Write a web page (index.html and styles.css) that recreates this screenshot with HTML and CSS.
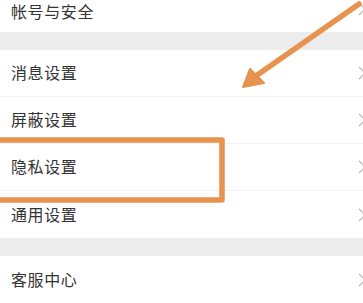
FILE: index.html
```html
<!DOCTYPE html>
<html lang="zh">
<head>
<meta charset="utf-8">
<link rel="stylesheet" href="styles.css">
</head>
<body>
<div class="page">
  <div class="group">
    <div class="row row-first"><span class="label">帐号与安全</span><svg class="chev" viewBox="0 0 8 14"><polyline points="1,1 7,7 1,13"/></svg></div>
  </div>
  <div class="band"></div>
  <div class="group">
    <div class="row"><span class="label">消息设置</span><svg class="chev" viewBox="0 0 8 14"><polyline points="1,1 7,7 1,13"/></svg></div>
    <div class="row"><span class="label">屏蔽设置</span><svg class="chev" viewBox="0 0 8 14"><polyline points="1,1 7,7 1,13"/></svg></div>
    <div class="row"><span class="label">隐私设置</span><svg class="chev" viewBox="0 0 8 14"><polyline points="1,1 7,7 1,13"/></svg></div>
    <div class="row"><span class="label">通用设置</span><svg class="chev" viewBox="0 0 8 14"><polyline points="1,1 7,7 1,13"/></svg></div>
  </div>
  <div class="band"></div>
  <div class="group">
    <div class="row"><span class="label">客服中心</span><svg class="chev" viewBox="0 0 8 14"><polyline points="1,1 7,7 1,13"/></svg></div>
  </div>
  <svg class="annot" viewBox="0 0 363 303" width="363" height="303">
    <line x1="359" y1="4" x2="253" y2="78" class="mark-line"/>
    <polygon points="243,87 250,69 264,83" class="mark-fill"/>
    <rect x="-10" y="140" width="232" height="60" class="mark-line"/>
  </svg>
</div>
</body>
</html>
```
FILE: styles.css
```css
html, body {
  margin: 0;
  padding: 0;
  background: #ffffff;
}
body {
  width: 363px;
  height: 303px;
  overflow: hidden;
  font-family: "Noto Sans CJK SC", "Noto Sans", sans-serif;
}
.page {
  position: relative;
  width: 363px;
  height: 303px;
  overflow: hidden;
}
.group {
  display: flex;
  flex-direction: column;
  background: #fff;
}
.row {
  height: 47px;
  display: flex;
  align-items: center;
  justify-content: space-between;
  padding-left: 11px;
  box-sizing: border-box;
  border-bottom: 1px solid #f2f2f2;
}
.group .row:last-child {
  border-bottom: none;
}
.row-first {
  height: 32px;
  padding-bottom: 9px;
  align-items: center;
}
.row-first .chev {
  margin-top: -6px;
}
.label {
  font-size: 16px;
  color: #333333;
  letter-spacing: 0.6px;
  line-height: 1.2;
}
.chev {
  width: 8px;
  height: 14px;
  margin-right: -3px;
  flex: none;
}
.chev polyline {
  fill: none;
  stroke: #b8b8b8;
  stroke-width: 1.2;
}
.band {
  height: 18px;
  background: #ececec;
}
.annot {
  position: absolute;
  left: 0;
  top: 0;
  pointer-events: none;
}
.mark-line {
  fill: none;
  stroke: #e8924f;
  stroke-width: 5.5;
  stroke-linecap: round;
  stroke-linejoin: round;
}
.mark-fill {
  fill: #e8924f;
  stroke: #e8924f;
  stroke-width: 2;
  stroke-linejoin: round;
}
```
